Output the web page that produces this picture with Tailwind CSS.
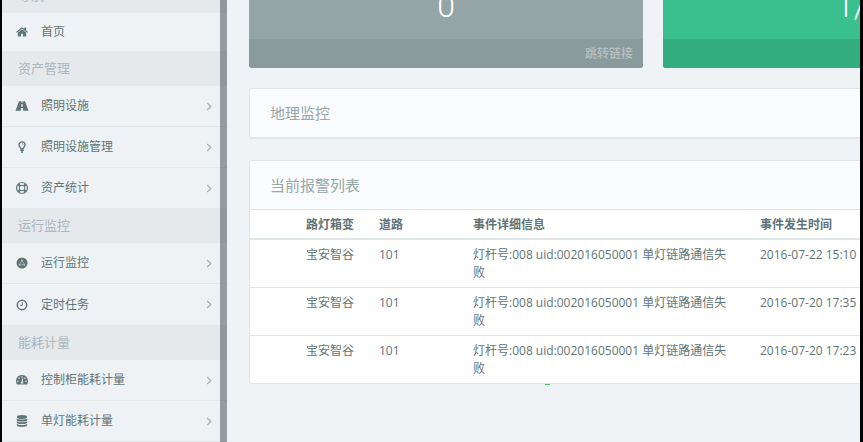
<!DOCTYPE html>
<html lang="zh-CN">
<head>
  <meta charset="UTF-8" />
  <meta name="viewport" content="width=device-width, initial-scale=1" />
  <title>智慧照明监控平台</title>
  <script src="https://cdn.jsdelivr.net/npm/@tailwindcss/browser@4"></script>
</head>
<body class="h-screen overflow-hidden bg-black pl-0.5 pr-[3px] font-['Open_Sans','Noto_Sans_CJK_SC',sans-serif] text-xs text-[#5f7476]">
  <!-- Icon sprites -->
  <svg class="hidden">
    <symbol id="i-chevron" viewBox="0 0 6 10"><path d="M1 1l4 4-4 4" fill="none" stroke="currentColor" stroke-width="1.5" /></symbol>
  </svg>

  <div class="flex h-full overflow-hidden bg-[#eff3f6]">
    <!-- Sidebar -->
    <aside class="relative w-[225px] shrink-0 overflow-hidden bg-[#eef2f5]">
      <nav class="-mt-[22px]">
        <h3 class="flex h-[35px] items-center bg-[#e5e9ec] pl-4 text-[13px] text-[#aab6c0]">导航</h3>
        <a href="#" class="flex h-[38px] items-center gap-[13px] pl-3.5">
          <svg class="size-3" viewBox="0 128 1664 1536" fill="currentColor"><path d="M1408 992v480q0 26-19 45t-45 19h-384v-384h-256v384h-384q-26 0-45-19t-19-45v-480q0-1 .5-3t.5-3l575-474 575 474q1 2 1 6zm223-69l-62 74q-8 9-21 11h-3q-13 0-21-7l-692-577-692 577q-12 8-24 7-13-2-21-11l-62-74q-8-10-7-23.5t11-21.5l719-599q32-26 76-26t76 26l244 204v-195q0-14 9-23t23-9h192q14 0 23 9t9 23v408l219 182q10 8 11 21.5t-7 23.5z" /></svg>
          <span>首页</span>
        </a>

        <h3 class="flex h-[35px] items-center bg-[#e5e9ec] pl-4 text-[13px] text-[#aab6c0]">资产管理</h3>
        <a href="#" class="flex h-[41px] items-center gap-[13px] border-b border-[#e3e7ea] pl-3.5 pr-[15px]">
          <svg class="size-3 overflow-visible" viewBox="0 0 12 12" fill="currentColor"><path d="M3 1.200h2.500l-.1 1.600h1.200l-.1-1.600H9L12.500 10.700H7.200L7 8H5l-.2 2.700H-.5zM5.200 4.200l-.1 2.300h1.800l-.1-2.300z" fill-rule="evenodd" /></svg>
          <span>照明设施</span>
          <svg class="ml-auto h-[9px] w-1.5 text-[#a9b2b7]"><use href="#i-chevron" /></svg>
        </a>
        <a href="#" class="flex h-[41px] items-center gap-[13px] border-b border-[#e3e7ea] pl-3.5 pr-[15px]">
          <svg class="size-3" viewBox="0 0 12 12" fill="none" stroke="currentColor" stroke-width="1.300"><path d="M4.900 8C4.900 6.500 3 5.800 3 3.900a3 3 0 0 1 6 0c0 1.900-1.900 2.600-1.900 4.100z" /><path d="M4.300 9.400h3.400M5 11h2" stroke-width="1.400" /><path d="M6 2.700c.7 0 1.200.5 1.200 1.100" stroke-width=".7" /></svg>
          <span>照明设施管理</span>
          <svg class="ml-auto h-[9px] w-1.5 text-[#a9b2b7]"><use href="#i-chevron" /></svg>
        </a>
        <a href="#" class="flex h-10 items-center gap-[13px] pl-3.5 pr-[15px]">
          <svg class="size-3 overflow-visible" viewBox="0 0 12 12" fill="none" stroke="currentColor"><circle cx="6" cy="6" r="5.500" stroke-width="1.200" /><circle cx="6" cy="6" r="2.800" /><path d="M2.200 2.200l1.900 1.900M9.800 2.200L7.900 4.100M2.200 9.800l1.900-1.900M9.800 9.800L7.900 7.900" stroke-width="2.200" /></svg>
          <span>资产统计</span>
          <svg class="ml-auto h-[9px] w-1.5 text-[#a9b2b7]"><use href="#i-chevron" /></svg>
        </a>

        <h3 class="flex h-[35px] items-center bg-[#e5e9ec] pl-4 text-[13px] text-[#aab6c0]">运行监控</h3>
        <a href="#" class="flex h-[41px] items-center gap-[13px] border-b border-[#e3e7ea] pl-3.5 pr-[15px]">
          <svg class="size-3" viewBox="0 0 12 12"><circle cx="6" cy="6" r="5.500" fill="currentColor" /><path d="M6 3.200L3.500 7.800h5z" fill="none" stroke="#b4c1c3" stroke-width=".7" /><g fill="#b4c1c3"><circle cx="6" cy="3.500" r=".9" /><circle cx="3.600" cy="7.700" r=".9" /><circle cx="8.400" cy="7.700" r=".9" /></g></svg>
          <span>运行监控</span>
          <svg class="ml-auto h-[9px] w-1.5 text-[#a9b2b7]"><use href="#i-chevron" /></svg>
        </a>
        <a href="#" class="flex h-[41px] items-center gap-[13px] pl-3.5 pr-[15px]">
          <svg class="size-3" viewBox="0 0 12 12" fill="none" stroke="currentColor"><circle cx="6" cy="6" r="4.700" stroke-width="1.500" /><path d="M6.300 3.200v3.200H4.200" /></svg>
          <span>定时任务</span>
          <svg class="ml-auto h-[9px] w-1.5 text-[#a9b2b7]"><use href="#i-chevron" /></svg>
        </a>

        <h3 class="flex h-[35px] items-center bg-[#e5e9ec] pl-4 text-[13px] text-[#aab6c0]">能耗计量</h3>
        <a href="#" class="flex h-[41px] items-center gap-[13px] border-b border-[#e3e7ea] pl-3.5 pr-[15px]">
          <svg class="size-3 overflow-visible" viewBox="0 0 12 12"><path d="M6 1a6.200 6.200 0 0 1 5.200 9.500H.8A6.200 6.200 0 0 1 6 1z" fill="currentColor" /><g fill="#eef2f5"><circle cx="1.900" cy="7.200" r=".8" /><circle cx="3.100" cy="4.200" r=".8" /><circle cx="6" cy="3" r=".8" /><circle cx="8.900" cy="4.200" r=".8" /><circle cx="10.100" cy="7.200" r=".8" /></g><path d="M6.700 4.500L6 8.500" stroke="#eef2f5" /><circle cx="6" cy="8.600" r="1.200" fill="#eef2f5" /></svg>
          <span>控制柜能耗计量</span>
          <svg class="ml-auto h-[9px] w-1.5 text-[#a9b2b7]"><use href="#i-chevron" /></svg>
        </a>
        <a href="#" class="flex h-[41px] items-center gap-[13px] border-b border-[#e3e7ea] pl-3.5 pr-[15px]">
          <svg class="size-3" viewBox="0 0 12 12" fill="currentColor"><ellipse cx="6" cy="2" rx="5.200" ry="1.900" /><path d="M.8 3.500c2 1.400 8.400 1.400 10.400 0v1.400c0 2-10.400 2-10.400 0zM.8 6.200c2 1.400 8.400 1.400 10.400 0v1.400c0 2-10.400 2-10.400 0zM.8 8.900c2 1.400 8.400 1.400 10.400 0v1.300c0 2.200-10.400 2.200-10.400 0z" /></svg>
          <span>单灯能耗计量</span>
          <svg class="ml-auto h-[9px] w-1.5 text-[#a9b2b7]"><use href="#i-chevron" /></svg>
        </a>
      </nav>
      <!-- Scroll thumb -->
      <div class="absolute inset-y-0 right-0 w-[7px] bg-[#3b434b]/50"></div>
    </aside>

    <!-- Content, runs past the right edge -->
    <main class="min-w-0 flex-1 overflow-hidden pl-[22px]">
      <div class="min-w-[1222px]">
        <div class="grid grid-cols-3 gap-5">
          <section class="overflow-hidden rounded-b-[3px] bg-[#95a5a5] text-white">
            <p class="flex h-[39px] items-end justify-center pb-[17px] font-[Roboto,'Open_Sans',sans-serif] text-[32px]/[32px] font-light">0</p>
            <footer class="flex h-[29px] items-center justify-end bg-[#8a9b9e] pr-2.5"><a href="#" class="text-[#bdc8ca]">跳转链接</a></footer>
          </section>
          <section class="overflow-hidden rounded-b-[3px] bg-[#3ac08f] text-white">
            <p class="flex h-[39px] items-end justify-center pb-[17px] font-[Roboto,'Open_Sans',sans-serif] text-[32px]/[32px] font-light">1/1</p>
            <footer class="flex h-[29px] items-center justify-end bg-[#34ad80] pr-2.5"><a href="#" class="text-[#9ad6bf]">跳转链接</a></footer>
          </section>
        </div>

        <section class="mt-5 rounded-[3px] border border-b-2 border-[#e0e5e8] bg-[#fafbfd]">
          <h2 class="flex h-12 items-center pl-5 text-[15px] text-[#98a8a8]">地理监控</h2>
        </section>

        <section class="mt-[21px] overflow-hidden rounded-[3px] border border-[#e0e5e8] bg-white">
          <h2 class="flex h-12 items-center bg-[#fafbfd] pl-5 text-[15px] text-[#98a8a8]">当前报警列表</h2>
          <table class="w-full table-fixed border-collapse text-left leading-[18px]">
            <colgroup>
              <col class="w-12" />
              <col class="w-[73px]" />
              <col class="w-[94px]" />
              <col class="w-[287px]" />
              <col />
            </colgroup>
            <thead class="border-t border-b-2 border-[#e0e5e8]">
              <tr>
                <th class="pt-1.5 pb-1"></th>
                <th class="px-2 pt-1.5 pb-1 font-bold">路灯箱变</th>
                <th class="px-2 pt-1.5 pb-1 font-bold">道路</th>
                <th class="px-2 pt-1.5 pb-1 font-bold">事件详细信息</th>
                <th class="px-2 pt-1.5 pb-1 font-bold">事件发生时间</th>
              </tr>
            </thead>
            <tbody class="divide-y divide-[#e0e5e8] align-top">
              <tr>
                <td></td>
                <td class="px-2 pt-1.5 pb-[5px]">宝安智谷</td>
                <td class="px-2 pt-1.5 pb-[5px]">101</td>
                <td class="pl-2 pr-5 pt-1.5 pb-[5px]">灯杆号:008 uid:002016050001 单灯链路通信失败</td>
                <td class="px-2 pt-1.5 pb-[5px]">2016-07-22 15:10</td>
              </tr>
              <tr>
                <td></td>
                <td class="px-2 pt-1.5 pb-[5px]">宝安智谷</td>
                <td class="px-2 pt-1.5 pb-[5px]">101</td>
                <td class="pl-2 pr-5 pt-1.5 pb-[5px]">灯杆号:008 uid:002016050001 单灯链路通信失败</td>
                <td class="px-2 pt-1.5 pb-[5px]">2016-07-20 17:35</td>
              </tr>
              <tr>
                <td></td>
                <td class="px-2 pt-1.5 pb-[5px]">宝安智谷</td>
                <td class="px-2 pt-1.5 pb-[5px]">101</td>
                <td class="pl-2 pr-5 pt-1.5 pb-[5px]">灯杆号:008 uid:002016050001 单灯链路通信失败</td>
                <td class="px-2 pt-1.5 pb-[5px]">2016-07-20 17:23</td>
              </tr>
            </tbody>
          </table>
        </section>
        <div class="ml-[296px] h-px w-[5px] bg-[#3fd04f]"></div>
      </div>
    </main>
  </div>
</body>
</html>
